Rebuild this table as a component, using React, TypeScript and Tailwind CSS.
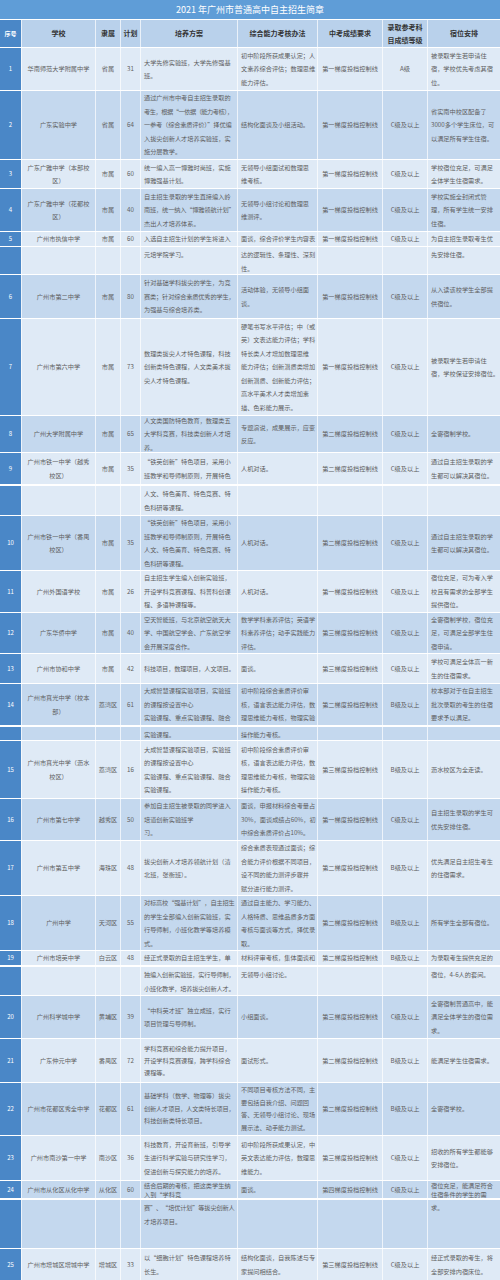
type Cell = string | string[];
type Row = {
  h: string;
  no?: string;
  c: Cell[];
  dark?: boolean;
  gap?: boolean;
  top?: boolean;
  lh?: string;
};

const cols = [
  { w: 'w-[74px]', a: 'justify-center text-center' },
  { w: 'w-[25px]', a: 'justify-center text-center' },
  { w: 'w-[20px]', a: 'justify-center text-center' },
  { w: 'w-[97px]', a: 'justify-start text-left pl-[3px]' },
  { w: 'w-[80px]', a: 'justify-start text-left pl-[3px]' },
  { w: 'w-[65px]', a: 'justify-center text-center' },
  { w: 'w-[45px]', a: 'justify-center text-center' },
  { w: 'w-[73px]', a: 'justify-start text-left pl-[3px]' },
];

const heads: Cell[] = [
  '学校',
  '隶属',
  '计划',
  '培养方案',
  '综合能力考核办法',
  '中考成绩要求',
  ['录取参考科', '目成绩等级'],
  '宿位安排',
];

const rows: Row[] = [
  {
    h: 'h-[43px]',
    no: '1',
    c: [
      '华南师范大学附属中学',
      '省属',
      '31',
      ['大学先修实验班，大学先修强基', '班。'],
      ['初中阶段所获成果认定；人', '文素养综合评估；数理思维', '能力评估。'],
      '第一梯度投档控制线',
      'A级',
      ['被录取学生若申请住', '宿，学校优先考虑其宿', '位。'],
    ],
  },
  {
    h: 'h-[69px]',
    no: '2',
    dark: true,
    c: [
      '广东实验中学',
      '省属',
      '64',
      [
        '通过广州市中考自主招生录取的',
        '考生，根据“一依据（能力考核），',
        '一参考（综合素质评价）”择优编',
        '入拔尖创新人才培养实验班，实',
        '施分层教学。',
      ],
      '结构化面谈及小组活动。',
      '第一梯度投档控制线',
      'C级及以上',
      ['省实南中校区配备了', '3000多个学生床位，可', '以满足所有学生住宿。'],
    ],
  },
  {
    h: 'h-[29px]',
    no: '3',
    c: [
      ['广东广雅中学（本部校', '区）'],
      '市属',
      '60',
      ['统一编入高一博雅时尚班，实施', '博雅强基计划。'],
      ['无领导小组面试和数理思', '维考核。'],
      '第一梯度投档控制线',
      'C级及以上',
      ['学校宿位充足，可满足', '全体学生住宿需求。'],
    ],
  },
  {
    h: 'h-[43px]',
    no: '4',
    dark: true,
    c: [
      ['广东广雅中学（花都校', '区）'],
      '市属',
      '40',
      ['自主招生录取的学生直接编入岭', '南班，统一纳入“博雅领航计划”', '杰出人才培养体系。'],
      ['无领导小组讨论和数理思', '维测评。'],
      '第一梯度投档控制线',
      'C级及以上',
      ['学校实施全封闭式管', '理，所有学生统一安排', '住宿。'],
    ],
  },
  {
    h: 'h-[15px]',
    no: '5',
    c: [
      '广州市执信中学',
      '市属',
      '60',
      '入选自主招生计划的学生将进入',
      '面谈，综合评价学生内容表',
      '第一梯度投档控制线',
      'C级及以上',
      '为自主招生录取考生优',
    ],
  },
  {
    h: 'h-[28px]',
    top: true,
    c: ['', '', '', '元培学院学习。', ['达的逻辑性、条理性、深刻', '性。'], '', '', '先安排住宿。'],
  },
  {
    h: 'h-[44px]',
    no: '6',
    dark: true,
    c: [
      '广州市第二中学',
      '市属',
      '80',
      ['针对基础学科拔尖的学生，为竞', '赛类；针对综合素质优秀的学生，', '为强基与综合培养类。'],
      ['活动体验，无领导小组面', '谈。'],
      '第一梯度投档控制线',
      'C级及以上',
      ['从入读该校学生全部提', '供宿位。'],
    ],
  },
  {
    h: 'h-[97px]',
    no: '7',
    c: [
      '广州市第六中学',
      '市属',
      '73',
      ['数理类拔尖人才特色课程，科技', '创新类特色课程，人文类美术拔', '尖人才特色课程。'],
      [
        '硬笔书写水平评估；中（或',
        '英）文表达能力评估；学科',
        '特长类人才增加数理思维',
        '能力评估；创新潜质类增加',
        '创新潜质、创新能力评估；',
        '高水平美术人才类增加素',
        '描、色彩能力展示。',
      ],
      '第一梯度投档控制线',
      'C级及以上',
      ['被录取学生若申请住', '宿，学校保证安排宿位。'],
    ],
  },
  {
    h: 'h-[37px]',
    no: '8',
    dark: true,
    c: [
      '广州大学附属中学',
      '市属',
      '65',
      ['人文类国防特色教育，数理类五', '大学科竞赛，科技类创新人才培', '养。'],
      ['专题演说，成果展示，应变', '反应。'],
      '第二梯度投档控制线',
      'C级及以上',
      '全寄宿制学校。',
    ],
  },
  {
    h: 'h-[32px]',
    no: '9',
    c: [
      ['广州市铁一中学（越秀', '校区）'],
      '市属',
      '35',
      ['“铁英创新”特色项目，采用小', '班教学和导师制原则，开展特色'],
      '人机对话。',
      '第二梯度投档控制线',
      'C级及以上',
      ['通过自主招生录取的学', '生都可以解决其宿位。'],
    ],
  },
  {
    h: 'h-[31px]',
    gap: true,
    top: true,
    c: ['', '', '', ['人文、特色美育、特色竞赛、特', '色科研等课程。'], '', '', '', ''],
  },
  {
    h: 'h-[55px]',
    no: '10',
    dark: true,
    c: [
      ['广州市铁一中学（番禺', '校区）'],
      '市属',
      '35',
      [
        '“铁英创新”特色项目，采用小',
        '班教学和导师制原则，开展特色',
        '人文、特色美育、特色竞赛、特',
        '色科研等课程。',
      ],
      '人机对话。',
      '第二梯度投档控制线',
      'C级及以上',
      ['通过自主招生录取的学', '生都可以解决其宿位。'],
    ],
  },
  {
    h: 'h-[42px]',
    no: '11',
    c: [
      '广州外国语学校',
      '市属',
      '26',
      ['自主招生学生编入创新实验班，', '开设学科竞赛课程、科普科创课', '程、多语种课程等。'],
      '人机对话。',
      '第一梯度投档控制线',
      'C级及以上',
      ['宿位充足，可为考入学', '校且有需求的全部学生', '提供宿位。'],
    ],
  },
  {
    h: 'h-[41px]',
    no: '12',
    dark: true,
    c: [
      '广东华侨中学',
      '市属',
      '40',
      ['空天智能班，与北京航空航天大', '学、中国航空学会、广东航空学', '会开展深度合作。'],
      ['数学学科素养评估；英语学', '科素养评估；动手实践能力', '评估。'],
      '第三梯度投档控制线',
      'C级及以上',
      ['全寄宿制学校，宿位充', '足，可满足全部学生住', '宿申请。'],
    ],
  },
  {
    h: 'h-[30px]',
    no: '13',
    c: [
      '广州市协和中学',
      '市属',
      '42',
      '科技项目，数理项目，人文项目。',
      '面谈。',
      '第三梯度投档控制线',
      'C级及以上',
      ['学校可满足全体高一新', '生的住宿需求。'],
    ],
  },
  {
    h: 'h-[42px]',
    no: '14',
    dark: true,
    c: [
      ['广州市真光中学（校本', '部）'],
      '荔湾区',
      '61',
      ['大成智慧课程实验项目，实验班', '的课程按设置中心', '实验课程、重点实验课程、融合'],
      ['初中阶段综合素质评价审', '核，语言表达能力评估，数', '理思维能力考核，物理实验'],
      '第二梯度投档控制线',
      'B级及以上',
      ['校本部对于在自主招生', '批次录取的考生的住宿', '要求予以满足。'],
    ],
  },
  {
    h: 'h-[15px]',
    gap: true,
    dark: true,
    top: true,
    c: ['', '', '', '实验课程。', '操作能力考核。', '', '', ''],
  },
  {
    h: 'h-[58px]',
    no: '15',
    c: [
      ['广州市真光中学（沥水', '校区）'],
      '荔湾区',
      '16',
      ['大成智慧课程实验项目，实验班', '的课程按设置中心', '实验课程、重点实验课程、融合', '实验课程。'],
      ['初中阶段综合素质评价审', '核，语言表达能力评估，数', '理思维能力考核，物理实验', '操作能力考核。'],
      '第三梯度投档控制线',
      'B级及以上',
      '沥水校区为全走读。',
    ],
  },
  {
    h: 'h-[42px]',
    no: '16',
    dark: true,
    c: [
      '广州市第七中学',
      '越秀区',
      '50',
      ['参加自主招生被录取的同学进入', '培道创新实验班学', '习。'],
      ['面谈，申报材料综合考量占', '30%，面谈成绩占60%，初', '中综合素质评价占10%。'],
      '第一梯度投档控制线',
      'C级及以上',
      ['自主招生录取的学生可', '优先安排住宿。'],
    ],
  },
  {
    h: 'h-[55px]',
    no: '17',
    c: [
      '广州市第五中学',
      '海珠区',
      '48',
      ['拔尖创新人才培养领航计划（清', '北班，张衡班）。'],
      ['综合素质表现通过面谈；综', '合能力评价根据不同项目，', '设不同的能力测评步骤并', '赋分进行能力测评。'],
      '第二梯度投档控制线',
      'B级及以上',
      ['优先满足自主招生考生', '的住宿需求。'],
    ],
  },
  {
    h: 'h-[55px]',
    no: '18',
    dark: true,
    c: [
      '广州中学',
      '天河区',
      '55',
      ['对标高校“强基计划”，自主招生', '的学生全部编入创新实验班，实', '行导师制，小班化教学等培养模', '式。'],
      ['通过自主能力、学习能力、', '人格特质、思维品质多方面', '考核与面谈等方式，择优录', '取。'],
      '第二梯度投档控制线',
      'B级及以上',
      '所有学生全部有宿位。',
    ],
  },
  {
    h: 'h-[15px]',
    no: '19',
    c: [
      '广州市培英中学',
      '白云区',
      '48',
      '经正式录取的自主招生学生，单',
      '材料评审考核，集体面谈和',
      '第二梯度投档控制线',
      'B级及以上',
      '为录取考生提供充足的',
    ],
  },
  {
    h: 'h-[30px]',
    gap: true,
    top: true,
    c: [
      '',
      '',
      '',
      ['独编入创新实验班，实行导师制，', '小班化教学，培养拔尖创新人才。'],
      '无领导小组讨论。',
      '',
      '',
      '宿位，4-6人的套间。',
    ],
  },
  {
    h: 'h-[43px]',
    no: '20',
    dark: true,
    c: [
      '广州科学城中学',
      '黄埔区',
      '39',
      ['“中科英才班”独立成班，实行', '项目管理与导师制。'],
      '小组面谈。',
      '第三梯度投档控制线',
      'C级及以上',
      ['全寄宿制普通高中，能', '满足全体学生的宿位需', '求。'],
    ],
  },
  {
    h: 'h-[44px]',
    no: '21',
    lh: 'leading-[12px]',
    c: [
      '广东仲元中学',
      '番禺区',
      '72',
      ['学科竞赛和综合能力提升项目，', '开设学科竞赛课程，跨学科综合', '课程等。'],
      '面试形式。',
      '第二梯度投档控制线',
      'B级及以上',
      '能满足学生住宿需求。',
    ],
  },
  {
    h: 'h-[53px]',
    no: '22',
    dark: true,
    lh: 'leading-[12.5px]',
    c: [
      '广州市花都区秀全中学',
      '花都区',
      '61',
      ['基础学科（数学、物理等）拔尖', '创新人才项目，人文类特长项目，', '科技创新类特长项目。'],
      ['不同项目考核方法不同，主', '要包括自我介绍、问题回', '答、无领导小组讨论、现场', '展示法、动手能力测试。'],
      '第二梯度投档控制线',
      'B级及以上',
      '全寄宿学校。',
    ],
  },
  {
    h: 'h-[45px]',
    no: '23',
    c: [
      '广州市南沙第一中学',
      '南沙区',
      '36',
      ['科技教育，开设育新班，引导学', '生进行科学实验与研究性学习，', '促进创新与探究能力的培养。'],
      ['初中阶段所获成果认定，中', '英文表达能力评估，数理思', '维能力。'],
      '第三梯度投档控制线',
      'C级及以上',
      ['招收的所有学生都能够', '安排宿位。'],
    ],
  },
  {
    h: 'h-[18px]',
    no: '24',
    dark: true,
    lh: 'leading-[9px]',
    c: [
      '广州市从化区从化中学',
      '从化区',
      '60',
      ['结合后期的考核，把这类学生纳', '入到“学科竞'],
      '面谈。',
      '第四梯度投档控制线',
      'C级及以上',
      ['宿位充足，能满足符合', '住宿条件的学生的需'],
    ],
  },
  {
    h: 'h-[50px]',
    gap: true,
    dark: true,
    top: true,
    c: ['', '', '', ['赛”、“培优计划”等拔尖创新人', '才培养项目。'], '', '', '', '求。'],
  },
  {
    h: 'h-[32px]',
    no: '25',
    c: [
      '广州市增城区增城中学',
      '增城区',
      '33',
      ['以“细胞计划”特色课程培养特', '长生。'],
      ['结构化面谈，自我陈述与专', '家提问相结合。'],
      '第三梯度投档控制线',
      'C级及以上',
      ['经正式录取的考生，将', '全部安排内宿床位。'],
    ],
  },
];

// long lines with full-width punctuation get squeezed a little so they stay in the cell
const Lines = ({ v }: { v: Cell }) => {
  const list = Array.isArray(v) ? v : [v];
  return (
    <div>
      {list.map((t, i) => (
        <div
          key={i}
          className={`whitespace-nowrap ${
            t.length > 15 ? 'tracking-[-0.45px]' : t.length > 14 ? 'tracking-[-0.15px]' : ''
          }`}
        >
          {t}
        </div>
      ))}
    </div>
  );
};

const TableRow = ({ r }: { r: Row }) => {
  return (
    <div
      className={`flex ${r.h} ${r.gap ? 'border-t-2' : 'border-t'} border-white ${
        r.dark ? 'bg-[#c4d8ee]' : 'bg-[#dfeaf6]'
      } ${r.lh ?? 'leading-[13.5px]'}`}
    >
      <div className="flex w-[21px] shrink-0 items-center justify-center bg-[#4a87c7] text-[6px] text-white">
        {r.no}
      </div>
      {cols.map((col, i) => (
        <div
          key={i}
          className={`flex ${col.w} shrink-0 overflow-hidden border-l border-white/70 ${col.a} ${
            r.top ? 'items-start pt-px' : 'items-center'
          }`}
        >
          <Lines v={r.c[i]} />
        </div>
      ))}
    </div>
  );
};

export default function App() {
  return (
    <div className="w-[500px] bg-white font-['Noto_Sans_CJK_SC','Noto_Sans',sans-serif] text-[6.2px] text-[#5e5e5e]">
      <div className="flex h-[19px] items-center justify-center bg-[#5f9dd7] text-[9px] text-white">
        2021 年广州市普通高中自主招生简章
      </div>

      <div className="flex h-[28px] border-t border-white bg-[#b9d1eb] text-[7px] font-bold leading-[13px] text-[#333]">
        <div className="flex w-[21px] shrink-0 items-center justify-center bg-[#4a87c7] text-[6px] text-white">
          序号
        </div>
        {cols.map((col, i) => (
          <div
            key={i}
            className={`flex ${col.w} shrink-0 items-center justify-center border-l border-white/70 text-center`}
          >
            <Lines v={heads[i]} />
          </div>
        ))}
      </div>

      {rows.map((r, i) => (
        <TableRow key={i} r={r} />
      ))}
    </div>
  );
}
